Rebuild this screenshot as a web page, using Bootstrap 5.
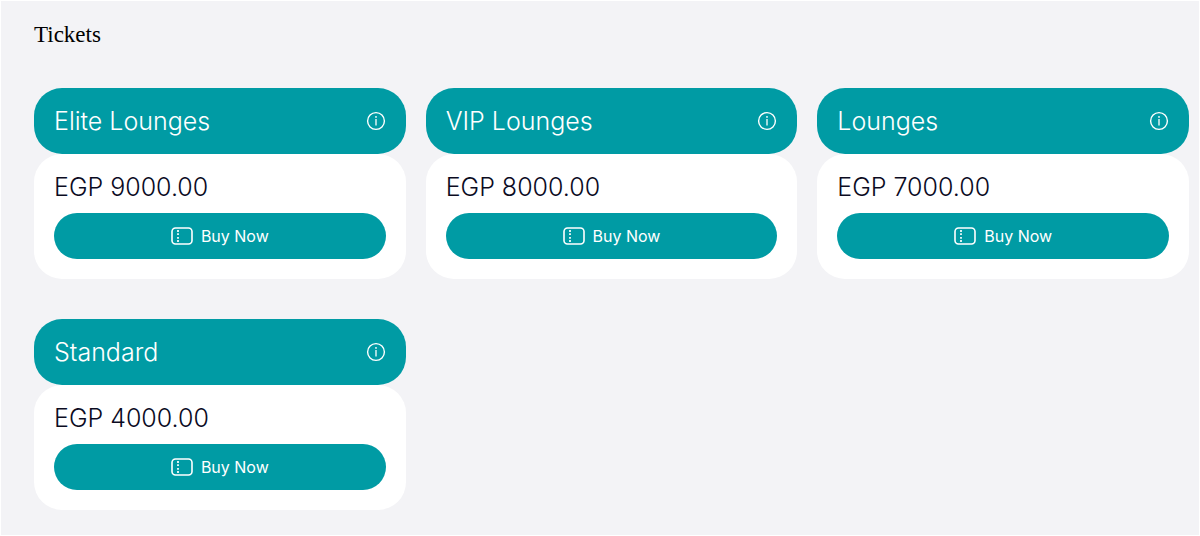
<!DOCTYPE html>
<html lang="en">
<head>
<meta charset="utf-8">
<meta name="viewport" content="width=device-width, initial-scale=1">
<title>Tickets</title>
<link href="https://cdn.jsdelivr.net/npm/bootstrap@5.3.0/dist/css/bootstrap.min.css" rel="stylesheet">
<style>
  :root { --teal: #009ba4; --page: #f3f3f6; }
  body { background: var(--page); font-family: Inter, "Liberation Sans", sans-serif; color: #0b0b1f; }
  .page-frame { border: 1px solid #fff; min-height: 100vh; padding: 19px 10px 24px 33px; }
  .page-title { font: 400 23px/30px "Liberation Serif", serif; color: #000; margin-bottom: 38px; }
  .ticket-grid { --bs-gutter-x: 20px; --bs-gutter-y: 40px; }
  .ticket-head { background: var(--teal); color: #fff; border-radius: 28px; height: 66px; padding: 0 20px; }
  .ticket-body { background: #fff; border-radius: 28px; padding: 14px 20px 20px; }
  .ticket-name, .ticket-price { font-size: 25px; font-weight: 350; line-height: 38px; margin: 0; }
  .ticket-price { margin-bottom: 7px; }
  .info-btn { color: #fff; line-height: 0; }
  .buy-btn { --bs-btn-color: #fff; --bs-btn-bg: var(--teal); --bs-btn-hover-color: #fff; --bs-btn-hover-bg: #00858d; --bs-btn-active-color: #fff; --bs-btn-active-bg: #00767d; height: 46px; font-size: 16px; }
</style>
</head>
<body>
<main class="page-frame">
  <h1 class="page-title">Tickets</h1>
  <svg class="d-none" aria-hidden="true">
    <symbol id="info" viewBox="0 0 20 20"><circle cx="10" cy="10" r="8.4" fill="none" stroke="currentColor" stroke-width="1.4"/><path d="M10 8v6.5" stroke="currentColor" stroke-width="1.3"/><circle cx="10" cy="5.9" r=".9" fill="currentColor"/></symbol>
    <symbol id="pass" viewBox="0 0 22 18"><rect x="1" y="1" width="20" height="16" rx="3.5" fill="none" stroke="currentColor" stroke-width="1.6"/><path d="M7 3v2M7 6.3v1.7M7 10v1.7M7 13v2" stroke="currentColor" stroke-width="1.7"/></symbol>
  </svg>
  <div class="row ticket-grid row-cols-1 row-cols-sm-2 row-cols-md-3">
    <article class="col">
      <header class="ticket-head d-flex align-items-center justify-content-between">
        <h2 class="ticket-name">Elite Lounges</h2>
        <button type="button" class="info-btn btn border-0 p-0" aria-label="About Elite Lounges"><svg width="20" height="20"><use href="#info"/></svg></button>
      </header>
      <div class="ticket-body">
        <p class="ticket-price">EGP 9000.00</p>
        <button type="button" class="buy-btn btn border-0 rounded-pill w-100 d-flex align-items-center justify-content-center gap-2"><svg width="22" height="18" aria-hidden="true"><use href="#pass"/></svg>Buy Now</button>
      </div>
    </article>
    <article class="col">
      <header class="ticket-head d-flex align-items-center justify-content-between">
        <h2 class="ticket-name">VIP Lounges</h2>
        <button type="button" class="info-btn btn border-0 p-0" aria-label="About VIP Lounges"><svg width="20" height="20"><use href="#info"/></svg></button>
      </header>
      <div class="ticket-body">
        <p class="ticket-price">EGP 8000.00</p>
        <button type="button" class="buy-btn btn border-0 rounded-pill w-100 d-flex align-items-center justify-content-center gap-2"><svg width="22" height="18" aria-hidden="true"><use href="#pass"/></svg>Buy Now</button>
      </div>
    </article>
    <article class="col">
      <header class="ticket-head d-flex align-items-center justify-content-between">
        <h2 class="ticket-name">Lounges</h2>
        <button type="button" class="info-btn btn border-0 p-0" aria-label="About Lounges"><svg width="20" height="20"><use href="#info"/></svg></button>
      </header>
      <div class="ticket-body">
        <p class="ticket-price">EGP 7000.00</p>
        <button type="button" class="buy-btn btn border-0 rounded-pill w-100 d-flex align-items-center justify-content-center gap-2"><svg width="22" height="18" aria-hidden="true"><use href="#pass"/></svg>Buy Now</button>
      </div>
    </article>
    <article class="col">
      <header class="ticket-head d-flex align-items-center justify-content-between">
        <h2 class="ticket-name">Standard</h2>
        <button type="button" class="info-btn btn border-0 p-0" aria-label="About Standard"><svg width="20" height="20"><use href="#info"/></svg></button>
      </header>
      <div class="ticket-body">
        <p class="ticket-price">EGP 4000.00</p>
        <button type="button" class="buy-btn btn border-0 rounded-pill w-100 d-flex align-items-center justify-content-center gap-2"><svg width="22" height="18" aria-hidden="true"><use href="#pass"/></svg>Buy Now</button>
      </div>
    </article>
  </div>
</main>
<script src="https://cdn.jsdelivr.net/npm/bootstrap@5.3.0/dist/js/bootstrap.bundle.min.js"></script>
</body>
</html>
